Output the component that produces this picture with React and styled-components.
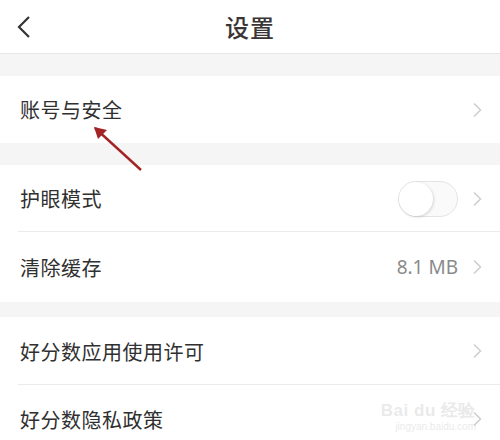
import React from "react";
import styled, { createGlobalStyle } from "styled-components";

const Global = createGlobalStyle`
  html, body { margin: 0; padding: 0; background: #ffffff; }
  body { font-family: "Noto Sans CJK SC", "Noto Sans", sans-serif; }
  * { box-sizing: border-box; }
`;

const Page = styled.div`
  position: relative;
  width: 500px;
  height: 440px;
  overflow: hidden;
  background: #f5f5f5;
  color: #333333;
`;

const Header = styled.header`
  height: 54px;
  background: #ffffff;
  border-bottom: 1px solid #e6e6e6;
  display: grid;
  grid-template-columns: 60px 1fr 60px;
  align-items: center;
`;

const Back = styled.button`
  border: 0;
  background: none;
  padding: 0 0 0 16px;
  height: 100%;
  display: flex;
  align-items: center;
  color: #333;
`;

const Title = styled.h1`
  margin: 0;
  text-align: center;
  font-size: 24px;
  font-weight: 500;
  color: #3a3434;
  letter-spacing: 1px;
`;

const Gap = styled.div`
  height: ${(p) => p.$h}px;
`;

const Group = styled.section`
  background: #ffffff;
`;

const Row = styled.div`
  height: ${(p) => p.$h || 67}px;
  display: flex;
  align-items: center;
  padding: 0 18px 0 20px;
  position: relative;
  ${(p) =>
    p.$divider &&
    `&::after {
      content: "";
      position: absolute;
      left: 18px;
      right: 0;
      bottom: 0;
      height: 1px;
      background: #ebebeb;
    }`}
`;

const Label = styled.span`
  flex: 1;
  font-size: 20px;
  color: #303030;
  letter-spacing: 0.5px;
`;

const Value = styled.span`
  font-family: "Noto Sans", "Open Sans", sans-serif;
  font-size: 19px;
  color: #8a8a8a;
  margin-right: 14px;
`;

const Toggle = styled.div`
  width: 60px;
  height: 36px;
  border-radius: 18px;
  border: 1px solid #e4e4e4;
  background: #fafafa;
  position: relative;
  margin-right: 14px;
  &::before {
    content: "";
    position: absolute;
    left: 0;
    top: 0;
    width: 34px;
    height: 34px;
    border-radius: 50%;
    background: #ffffff;
    box-shadow: 1px 1px 3px rgba(0, 0, 0, 0.15);
  }
`;

const Chevron = () => (
  <svg width="10" height="16" viewBox="0 0 10 16">
    <path d="M2 1.5 L8.5 8 L2 14.5" fill="none" stroke="#cfcfcf" strokeWidth="1.6" />
  </svg>
);

const Arrow = styled.svg`
  position: absolute;
  left: 85px;
  top: 118px;
`;

const Watermark = styled.div`
  position: absolute;
  right: 24px;
  bottom: 8px;
  text-align: right;
  color: rgba(200, 200, 200, 0.4);
  font-family: "Liberation Sans", sans-serif;
  line-height: 1;
  pointer-events: none;
`;

const WmMain = styled.div`
  font-size: 17px;
  font-weight: 700;
  letter-spacing: 0.5px;
`;

const WmSub = styled.div`
  font-size: 10px;
  margin-top: 3px;
`;

export default function App() {
  return (
    <Page>
      <Global />
      <Header>
        <Back aria-label="back">
          <svg width="16" height="24" viewBox="0 0 16 24">
            <path d="M13 2 L3 12 L13 22" fill="none" stroke="#333" strokeWidth="2.2" />
          </svg>
        </Back>
        <Title>设置</Title>
        <span />
      </Header>
      <Gap $h={22} />
      <Group>
        <Row>
          <Label>账号与安全</Label>
          <Chevron />
        </Row>
      </Group>
      <Gap $h={22} />
      <Group>
        <Row $divider>
          <Label>护眼模式</Label>
          <Toggle />
          <Chevron />
        </Row>
        <Row $h={70}>
          <Label>清除缓存</Label>
          <Value>8.1 MB</Value>
          <Chevron />
        </Row>
      </Group>
      <Gap $h={15} />
      <Group>
        <Row $divider $h={68}>
          <Label>好分数应用使用许可</Label>
          <Chevron />
        </Row>
        <Row $h={68}>
          <Label>好分数隐私政策</Label>
          <Chevron />
        </Row>
      </Group>
      <Arrow width="70" height="60" viewBox="0 0 70 60">
        <path d="M10 10 L56 52" stroke="#a32424" strokeWidth="2.4" fill="none" />
        <path d="M9 9 L22 12 L13 21 Z" fill="#a32424" />
      </Arrow>
      <Watermark>
        <WmMain>Bai du 经验</WmMain>
        <WmSub>jingyan.baidu.com</WmSub>
      </Watermark>
    </Page>
  );
}
